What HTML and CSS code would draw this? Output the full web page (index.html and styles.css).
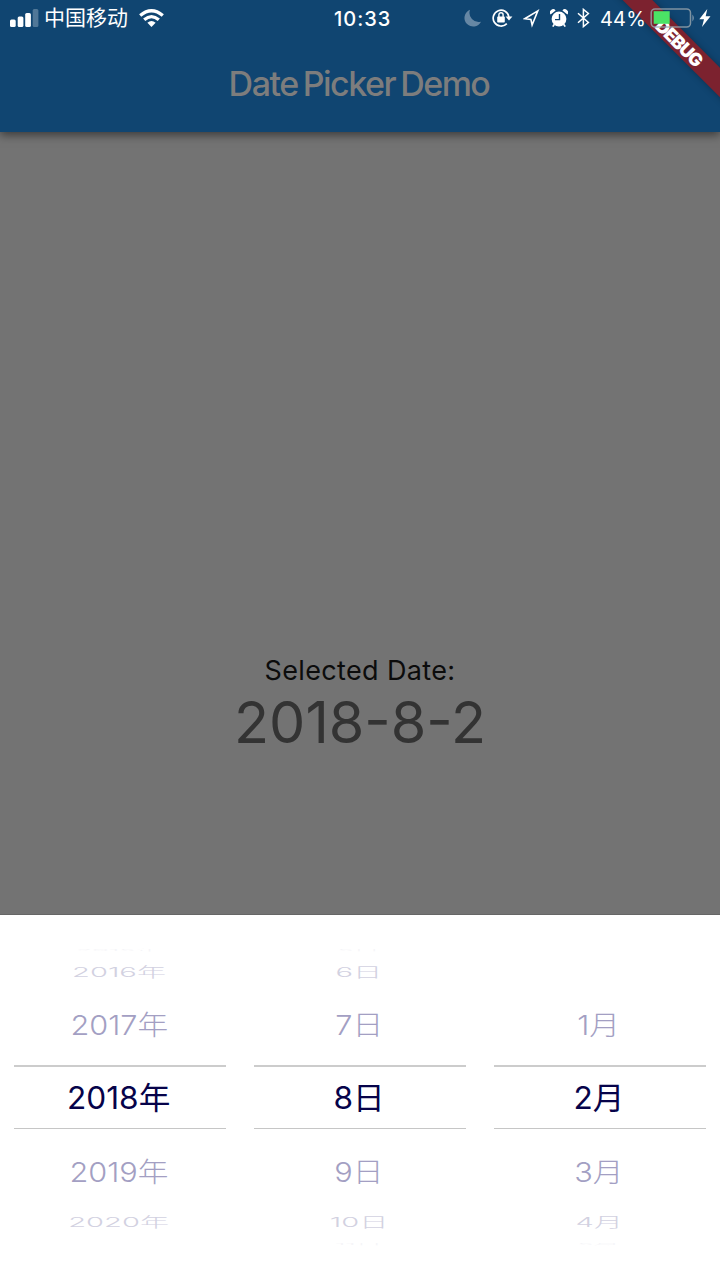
FILE: index.html
```html
<!DOCTYPE html>
<html lang="zh-CN">
<head>
<meta charset="utf-8">
<title>Date Picker Demo</title>
<link rel="stylesheet" href="styles.css">
</head>
<body>
<div class="screen">
  <header class="app-header">
    <div class="status">
      <div class="status-left">
        <svg class="signal" width="29" height="18" viewBox="0 0 29 18"><g fill="#fff"><rect x="0" y="10.5" width="5.7" height="7.5" rx="1.5"/><rect x="7.7" y="7.5" width="5.7" height="10.5" rx="1.5"/><rect x="15.2" y="4" width="5.7" height="14" rx="1.5"/><rect x="22.7" y="0" width="5.7" height="18" rx="1.5" opacity=".27"/></g></svg>
        <span class="carrier">中国移动</span>
        <svg class="wifi" width="25" height="18" viewBox="0 0 25 18"><g fill="none" stroke="#fff" stroke-width="3.3"><path d="M1.2 6.5Q12.5 -3 23.8 6.5"/><path d="M5.2 10.8Q12.5 4.4 19.8 10.8"/></g><path d="M8.4 13.7Q12.5 10.4 16.6 13.7L12.5 18Z" fill="#fff"/></svg>
      </div>
      <span class="clock">10:33</span>
      <div class="status-right">
        <svg class="moon" width="18" height="18" viewBox="0 0 18 18"><path d="M6 .8A8.7 8.7 0 1 0 17 12.7A9.2 9.2 0 0 1 6 .8Z" fill="#6687a4"/></svg>
        <svg class="lock" width="21" height="20" viewBox="0 0 21 20"><path d="M14.8 15.6A7.9 7.9 0 1 1 16.9 9" fill="none" stroke="#fff" stroke-width="1.7"/><path d="M13.6 8.4H20.4L17 12.6Z" fill="#fff"/><rect x="5.2" y="8.6" width="7.6" height="6" rx=".8" fill="#fff"/><path d="M6.9 9V6.8a2.1 2.1 0 0 1 4.2 0V9" fill="none" stroke="#fff" stroke-width="1.4"/></svg>
        <svg class="location" width="17" height="19" viewBox="0 0 17 19"><path d="M14.8 1.9L1.8 9.7L7.9 10.4L9.1 16Z" fill="none" stroke="#fff" stroke-width="1.6"/></svg>
        <svg class="alarm" width="18" height="19" viewBox="0 0 18 19"><circle cx="9" cy="10" r="7.4" fill="#fff"/><path d="M.6 5.4A3.1 3.1 0 0 1 5.6 1.5ZM12.4 1.5A3.1 3.1 0 0 1 17.4 5.4Z" fill="#fff"/><path d="M4.2 15.5L2.8 17.6M13.8 15.5L15.2 17.6" stroke="#fff" stroke-width="1.7"/><path d="M9.5 5V10.6H5" fill="none" stroke="#104571" stroke-width="1.4"/></svg>
        <svg class="bluetooth" width="13" height="20" viewBox="0 0 13 20"><path d="M1 5.3L11.4 14.5L6.4 18.6V1.4L11.4 5.5L1 14.7" fill="none" stroke="#fff" stroke-width="1.5"/></svg>
        <span class="percent">44%</span>
        <svg class="battery" width="45" height="20" viewBox="0 0 45 20"><rect x="1.2" y="1" width="39.3" height="18" rx="3.8" fill="none" stroke="#9ba6ae" stroke-opacity=".8" stroke-width="1.5"/><rect x="3.7" y="3.2" width="16" height="12.6" fill="#4be365"/><path d="M42.4 6.5Q45.4 10 42.4 13.5Z" fill="#7893aa"/></svg>
        <svg class="bolt" width="12" height="18" viewBox="0 0 12 18"><path d="M8.3 0L.3 10.3H5L3 18L11.5 7.2H6.7Z" fill="#fff"/></svg>
      </div>
    </div>
    <h1 class="title">Date Picker Demo</h1>
    <div class="debug-banner">DEBUG</div>
  </header>
  <main class="content">
    <div class="label">Selected Date:</div>
    <div class="date">2018-8-2</div>
  </main>
  <section class="picker">
    <div class="wheel">
      <div class="row edge"><span>2015年</span></div>
      <div class="row far"><span>2016年</span></div>
      <div class="row near"><span>2017年</span></div>
      <div class="row selected"><span>2018年</span></div>
      <div class="row near"><span>2019年</span></div>
      <div class="row far"><span>2020年</span></div>
    </div>
    <div class="wheel">
      <div class="row edge"><span>5日</span></div>
      <div class="row far"><span>6日</span></div>
      <div class="row near"><span>7日</span></div>
      <div class="row selected"><span>8日</span></div>
      <div class="row near"><span>9日</span></div>
      <div class="row far"><span>10日</span></div>
      <div class="row edge"><span>11日</span></div>
    </div>
    <div class="wheel">
      <div class="row edge"></div>
      <div class="row far"></div>
      <div class="row near"><span>1月</span></div>
      <div class="row selected"><span>2月</span></div>
      <div class="row near"><span>3月</span></div>
      <div class="row far"><span>4月</span></div>
      <div class="row edge"><span>5月</span></div>
    </div>
  </section>
</div>
</body>
</html>
```
FILE: styles.css
```css
* { box-sizing: border-box; }
body {
  margin: 0;
  font-family: Inter, "Noto Sans CJK SC", sans-serif;
}
.screen {
  width: 720px;
  height: 1280px;
  display: flex;
  flex-direction: column;
  overflow: hidden;
  background: #737373;
}
.app-header {
  position: relative;
  height: 132px;
  flex: none;
  background: #104571;
  box-shadow: 0 3px 9px rgba(0, 0, 0, .5);
  clip-path: inset(0 0 -20px 0);
}
.status {
  position: relative;
  z-index: 2;
  height: 36px;
  display: grid;
  grid-template-columns: 334px 130px 256px;
  align-items: center;
  color: #fff;
}
.status-left, .status-right { display: flex; align-items: center; height: 36px; }
.status svg { display: block; flex: none; }
.signal { margin-left: 10px; }
.carrier { margin-left: 5px; width: 84px; font-size: 21px; line-height: 38px; white-space: nowrap; }
.wifi { margin-left: 11px; }
.clock { padding-top: 1px; font-size: 20px; font-weight: 500; letter-spacing: 1px; }
.lock { margin-left: 10px; }
.location { margin-left: 10px; }
.alarm { margin-left: 10px; }
.bluetooth { margin-left: 9px; }
.percent { margin-left: 10px; width: 44px; padding-top: 1px; font-size: 20px; letter-spacing: .2px; }
.battery { margin-left: 6px; }
.bolt { margin-left: 4px; }
.title {
  margin: 0;
  height: 96px;
  padding-right: 2px;
  text-align: center;
  font-size: 34px;
  font-weight: 500;
  line-height: 96px;
  letter-spacing: -1.5px;
  word-spacing: -2.5px;
  color: #7d7d7d;
}
.debug-banner {
  position: absolute;
  z-index: 1;
  left: 578.5px;
  top: 31px;
  width: 200px;
  height: 21px;
  padding-left: 2px;
  transform: rotate(45deg);
  background: #7c222f;
  box-shadow: 0 0 7px rgba(0, 0, 0, .3);
  text-align: center;
  font-size: 18px;
  font-weight: 900;
  line-height: 23px;
  letter-spacing: -1px;
  color: #fff;
}
.content {
  height: 782px;
  flex: none;
  padding-top: 521px;
  text-align: center;
}
.label { font-size: 27px; line-height: 36px; letter-spacing: .35px; color: #0c0c0c; }
.date { font-size: 57.5px; line-height: 67px; color: #333; }
.picker {
  height: 366px;
  display: grid;
  grid-template-columns: repeat(3, 1fr);
  padding-top: 30px;
  background: #fff;
  border-top: 1px solid #666;
}
.wheel { display: flex; flex-direction: column; padding: 0 14px; }
.row {
  display: flex;
  align-items: center;
  justify-content: center;
  flex: none;
  padding-right: 2px;
  font-size: 31px;
  line-height: 40px;
  white-space: nowrap;
  color: #06034a;
}
.selected {
  height: 64px;
  margin: 7px 0;
  padding-top: 1px;
  border-top: 2px solid #ccc;
  border-bottom: 1px solid #c6c6c6;
}
.selected span { transform: scaleX(1.02); }
.near { height: 69px; padding-top: 2px; color: #a39fc3; font-weight: 300; }
.near span { transform: scale(.99, .87); }
.far { height: 34px; color: #d2d1e1; font-weight: 300; }
.far span { transform: scale(.94, .43); }
.edge { height: 10px; color: #f5f5f8; font-weight: 300; }
.edge span { transform: scale(.86, .07); }
```
